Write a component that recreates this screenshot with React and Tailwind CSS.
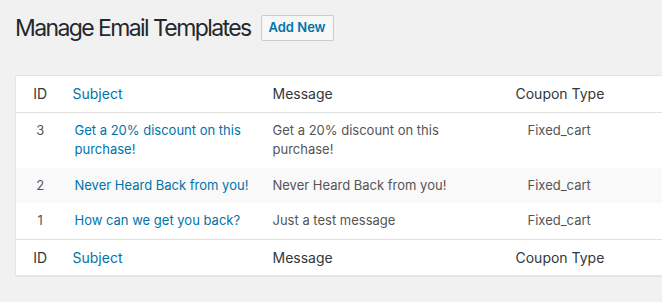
const templates = [
  {
    id: 3,
    subject: "Get a 20% discount on this purchase!",
    message: "Get a 20% discount on this purchase!",
    type: "Fixed_cart",
  },
  {
    id: 2,
    subject: "Never Heard Back from you!",
    message: "Never Heard Back from you!",
    type: "Fixed_cart",
  },
  {
    id: 1,
    subject: "How can we get you back?",
    message: "Just a test message",
    type: "Fixed_cart",
  },
];

function HeaderRow() {
  return (
    <tr className="text-[14px] leading-[19.6px] text-[#32373c]">
      <th className="w-[49px] py-2 text-center font-normal">ID</th>
      <th className="w-[198px] px-2 py-2 text-left font-normal">
        <a className="text-[#0073aa]" href="#">
          Subject
        </a>
      </th>
      <th className="w-[197px] px-2.5 py-2 text-left font-normal">Message</th>
      <th className="py-2 pl-[56px] text-left font-normal">Coupon Type</th>
    </tr>
  );
}

export default function App() {
  return (
    <div
      className="h-[302px] w-[662px] overflow-hidden bg-[#f1f1f1] text-[13px] text-[#444]"
      style={{ fontFamily: "Inter, 'Noto Sans', sans-serif" }}
    >
      <div className="flex items-center gap-[10px] pt-[15px] pl-[15px]">
        <h1 className="text-[23px] leading-[26px] font-normal tracking-[-1.6px] text-[#23282d]">
          Manage Email Templates
        </h1>
        <button
          type="button"
          className="h-[26px] rounded-[2px] border border-[#ccc] bg-[#f7f7f7] px-[7px] text-[13px] font-semibold text-[#0073aa]"
        >
          Add New
        </button>
      </div>

      <table className="mt-[34px] ml-[15px] w-[700px] table-fixed border-collapse border border-[#e5e5e5] bg-white shadow-[0_1px_1px_rgba(0,0,0,0.04)]">
        <colgroup>
          <col className="w-[49px]" />
          <col className="w-[198px]" />
          <col className="w-[197px]" />
          <col />
        </colgroup>
        <thead className="border-b border-[#e1e1e1]">
          <HeaderRow />
        </thead>
        <tbody className="leading-[19.5px]">
          {templates.map((t, i) => (
            <tr key={t.id} className={i % 2 === 1 ? "bg-[#f9f9f9]" : ""}>
              <td className="py-2 text-center align-top text-[#555]">{t.id}</td>
              <td className="px-2.5 py-2 align-top">
                <a className="text-[#0073aa]" href="#">
                  {t.subject}
                </a>
              </td>
              <td className="px-2.5 py-2 align-top text-[#555]">{t.message}</td>
              <td className="py-2 pl-[68px] align-top text-[#555]">{t.type}</td>
            </tr>
          ))}
        </tbody>
        <tfoot className="border-t border-[#e1e1e1]">
          <HeaderRow />
        </tfoot>
      </table>
    </div>
  );
}
